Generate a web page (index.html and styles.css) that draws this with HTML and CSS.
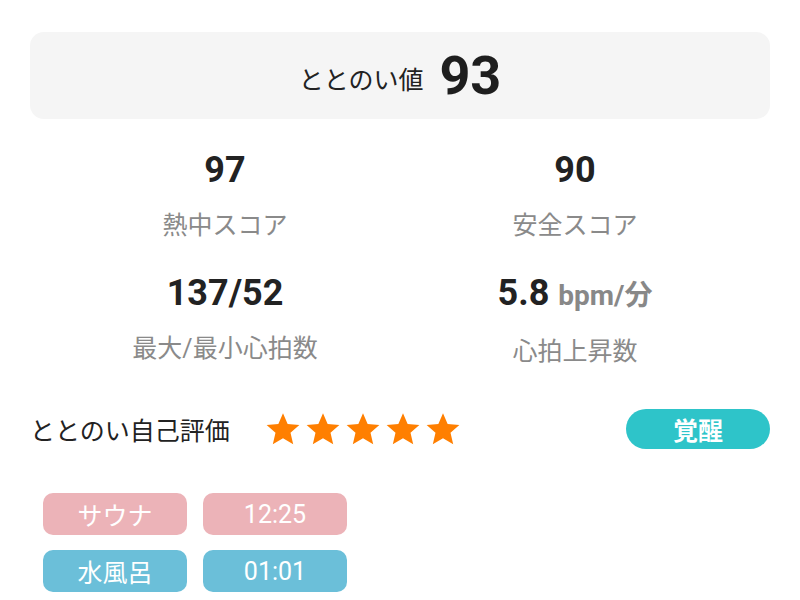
FILE: index.html
```html
<!DOCTYPE html>
<html lang="ja">
<head>
<meta charset="utf-8">
<link rel="stylesheet" href="styles.css">
</head>
<body>
<div class="page">
  <div class="score-card">
    <span class="score-label">ととのい値</span>
    <span class="score-value">93</span>
  </div>
  <div class="stats">
    <div class="stat">
      <div class="stat-value">97</div>
      <div class="stat-label">熱中スコア</div>
    </div>
    <div class="stat">
      <div class="stat-value">90</div>
      <div class="stat-label">安全スコア</div>
    </div>
    <div class="stat">
      <div class="stat-value">137/52</div>
      <div class="stat-label">最大/最小心拍数</div>
    </div>
    <div class="stat">
      <div class="stat-value">5.8 <span class="unit">bpm/分</span></div>
      <div class="stat-label">心拍上昇数</div>
    </div>
  </div>
  <div class="rating-row">
    <span class="rating-label">ととのい自己評価</span>
    <div class="stars">
      <svg viewBox="0 0 24 24" class="star"><path d="M12 1.5l3.1 7.2 7.8.7-5.9 5.1 1.8 7.6L12 18.1l-6.8 4 1.8-7.6-5.9-5.1 7.8-.7z"/></svg>
      <svg viewBox="0 0 24 24" class="star"><path d="M12 1.5l3.1 7.2 7.8.7-5.9 5.1 1.8 7.6L12 18.1l-6.8 4 1.8-7.6-5.9-5.1 7.8-.7z"/></svg>
      <svg viewBox="0 0 24 24" class="star"><path d="M12 1.5l3.1 7.2 7.8.7-5.9 5.1 1.8 7.6L12 18.1l-6.8 4 1.8-7.6-5.9-5.1 7.8-.7z"/></svg>
      <svg viewBox="0 0 24 24" class="star"><path d="M12 1.5l3.1 7.2 7.8.7-5.9 5.1 1.8 7.6L12 18.1l-6.8 4 1.8-7.6-5.9-5.1 7.8-.7z"/></svg>
      <svg viewBox="0 0 24 24" class="star"><path d="M12 1.5l3.1 7.2 7.8.7-5.9 5.1 1.8 7.6L12 18.1l-6.8 4 1.8-7.6-5.9-5.1 7.8-.7z"/></svg>
    </div>
    <span class="badge">覚醒</span>
  </div>
  <div class="tags">
    <span class="tag sauna">サウナ</span>
    <span class="tag sauna">12:25</span>
    <span class="tag water">水風呂</span>
    <span class="tag water">01:01</span>
  </div>
</div>
</body>
</html>
```
FILE: styles.css
```css
* { box-sizing: border-box; }
html, body { margin: 0; padding: 0; background: #fff; }
body {
  font-family: Roboto, "Noto Sans CJK JP", sans-serif;
  color: #222;
}
.page {
  width: 800px;
  padding: 32px 30px 0 30px;
}
.score-card {
  height: 87px;
  background: #f5f5f5;
  border-radius: 14px;
  display: flex;
  align-items: center;
  justify-content: center;
  gap: 16px;
}
.score-label {
  font-size: 25px;
  color: #222;
  padding-top: 5px;
}
.score-value {
  font-size: 54px;
  font-weight: 700;
  color: #1e1e1e;
}
.stats {
  display: grid;
  grid-template-columns: 1fr 1fr;
  padding: 0 20px;
  margin-top: 29px;
  row-gap: 27px;
}
.stat {
  text-align: center;
}
.stat-value {
  font-size: 36px;
  font-weight: 700;
  line-height: 44px;
  color: #222;
}
.unit {
  font-size: 28px;
  color: #888;
}
.stat-label {
  font-size: 25px;
  line-height: 36px;
  margin-top: 16px;
  color: #8a8a8a;
}
.rating-row {
  display: flex;
  align-items: center;
  margin-top: 39px;
  height: 40px;
}
.rating-label {
  font-size: 25px;
  color: #222;
}
.stars {
  display: flex;
  margin-left: 35px;
  gap: 4px;
}
.star {
  width: 36px;
  height: 36px;
  fill: #ff7f00;
}
.badge {
  margin-left: auto;
  width: 144px;
  height: 40px;
  border-radius: 20px;
  background: #2ec4c9;
  color: #fff;
  font-weight: 700;
  font-size: 25px;
  display: flex;
  align-items: center;
  justify-content: center;
}
.tags {
  display: grid;
  grid-template-columns: 144px 144px;
  column-gap: 16px;
  row-gap: 15px;
  margin-top: 44px;
  margin-left: 13px;
}
.tag {
  height: 42px;
  border-radius: 10px;
  color: #fff;
  font-size: 25px;
  display: flex;
  align-items: center;
  justify-content: center;
}
.sauna { background: #ecb3b8; }
.water { background: #6bbfd9; }
```
